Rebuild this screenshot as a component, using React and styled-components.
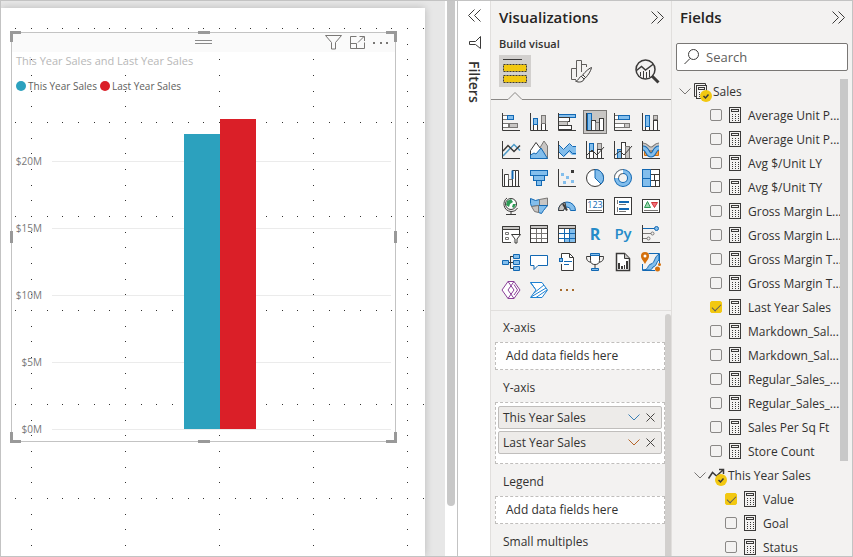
import React from "react";
import styled, { createGlobalStyle } from "styled-components";

const INK = "#323130";
const DARK = "#3b3a39";
const BLUE = "#1268b3";
const SKY = "#83beec";
const GRAY = "#797775";
const SILVER = "#c8c6c4";
const YELLOW = "#f2c811";

const GlobalStyle = createGlobalStyle`
  * { box-sizing: border-box; }
  body { margin: 0; font-family: "Open Sans", "Noto Sans", sans-serif; font-size: 12px; color: ${INK}; }
  button, input { font: inherit; color: inherit; }
  h2, h3, p, ul { margin: 0; padding: 0; }
  svg { display: block; flex: none; overflow: visible; }
`;

const Shell = styled.div`
  display: flex;
  height: 100vh;
  overflow: hidden;
  border: 1px solid #c3c3c3;
  background: #fff;
`;

/* ---------- report canvas ---------- */
const Workspace = styled.main`
  flex: 1;
  min-width: 0;
  display: flex;
`;
const Desk = styled.div`
  flex: 1;
  min-width: 0;
  padding: 7px 20px 0 0;
  background: #e7e7e7;
  overflow: hidden;
`;
const Page = styled.div`
  position: relative;
  height: 100%;
  overflow: hidden;
  background: #fff;
  box-shadow: 0 0 8px rgba(0, 0, 0, 0.2);
`;
const GridDots = styled.svg`
  width: 100%;
  height: 100%;
`;
const CanvasScroll = styled.div`
  width: 13px;
  padding: 0 2px;
  border-right: 1px solid #c3c3c3;
`;
const CanvasThumb = styled.div`
  width: 8px;
  height: 91%;
  border-radius: 0 0 4px 4px;
  background: #c8c8c8;
`;

const Visual = styled.section`
  position: absolute;
  left: 10px;
  top: 24px;
  width: 385px;
  height: 410px;
  border: 1px solid #c3c3c3;
`;
const VisualHeader = styled.header`
  display: flex;
  align-items: center;
  justify-content: flex-end;
  gap: 6px;
  height: 19px;
  padding-right: 5px;
  background: #fafafa;
`;
const HeaderButton = styled.button`
  display: grid;
  place-items: center;
  width: 18px;
  height: 18px;
  padding: 0;
  border: 0;
  background: none;
`;
const Grip = styled.div`
  position: absolute;
  top: 7px;
  left: 183px;
  width: 17px;
  height: 4px;
  border: solid #8a8a8a;
  border-width: 1px 0;
`;
const VisualTitle = styled.h3`
  padding: 0 4px;
  font-size: 11px;
  font-weight: 400;
  line-height: 18px;
  color: #b8b8b8;
`;
const Legend = styled.ul`
  display: flex;
  gap: 3px;
  padding: 8px 4px 0;
  list-style: none;
`;
const LegendItem = styled.li`
  display: flex;
  align-items: center;
  gap: 2px;
  font-size: 10px;
  line-height: 16px;
  color: #605e5c;
  &::before {
    content: "";
    width: 10px;
    height: 10px;
    border-radius: 50%;
    background: ${(p) => p.$color};
  }
`;
const Plot = styled.svg`
  width: 383px;
  height: 346px;
  text { font-size: 10px; fill: #777; text-anchor: end; }
`;
const Handles = styled.svg`
  position: absolute;
  left: -2px;
  top: -2px;
  width: 387px;
  height: 412px;
  pointer-events: none;
`;

/* ---------- filters rail ---------- */
const FilterRail = styled.aside`
  display: flex;
  flex-direction: column;
  align-items: center;
  gap: 12px;
  width: 33px;
  padding-top: 5px;
  border-right: 1px solid #e1dfdd;
  background: #fff;
`;
const RailTitle = styled.h2`
  writing-mode: vertical-rl;
  font-size: 14px;
  line-height: 20px;
  font-weight: 600;
`;
const IconButton = styled.button`
  display: grid;
  place-items: center;
  width: 18px;
  height: 18px;
  padding: 0;
  border: 0;
  background: none;
`;

/* ---------- panes ---------- */
const Pane = styled.aside`
  display: flex;
  flex-direction: column;
  width: ${(p) => (p.$last ? 180 : 181)}px;
  flex: none;
  border-right: ${(p) => (p.$last ? "0" : "1px solid #e1dfdd")};
  background: #f3f2f1;
`;
const PaneHead = styled.header`
  display: flex;
  align-items: center;
  justify-content: space-between;
  height: 32px;
  padding: 0 5px 0 8px;
`;
const PaneTitle = styled.h2`
  font-size: 15px;
  line-height: 20px;
  font-weight: 600;
  color: #252423;
`;
const Subtitle = styled.h3`
  padding-left: 8px;
  font-size: 11px;
  line-height: 22px;
  font-weight: 600;
`;
const Modes = styled.div`
  display: flex;
  gap: 34px;
  padding-left: 8px;
`;
const ModeButton = styled.button`
  display: grid;
  place-items: center;
  width: 32px;
  height: 32px;
  padding: 0;
  border: 0;
  background: ${(p) => (p.$active ? "#d2d0ce" : "transparent")};
`;
const Gallery = styled.div`
  display: grid;
  grid-template-columns: repeat(6, 24px);
  gap: 4px;
  padding: 10px 8px 8px;
  border-bottom: 1px solid #e1dfdd;
`;
const VisualType = styled.button`
  display: grid;
  place-items: center;
  width: 24px;
  height: 24px;
  padding: 0;
  border: 1px solid ${(p) => (p.$active ? "#797775" : "transparent")};
  background: ${(p) => (p.$active ? "#c8c6c4" : "transparent")};
`;
const WellArea = styled.div`
  flex: 1;
  min-height: 0;
  display: flex;
  overflow: hidden;
`;
const Wells = styled.div`
  flex: 1;
  min-width: 0;
  padding: 5px 0 0 4px;
`;
const WellThumb = styled.div`
  width: 6px;
  margin-top: 3px;
  border-radius: 3px 3px 0 0;
  background: #d2d0ce;
`;
const WellLabel = styled.h3`
  padding: 2px 8px 4px;
  font-size: 12px;
  line-height: 20px;
  font-weight: 400;
`;
const Well = styled.div`
  display: flex;
  flex-direction: column;
  gap: 2px;
  min-height: 28px;
  margin-bottom: 6px;
  padding: ${(p) => (p.$filled ? "3px 2px 9px" : "3px 10px")};
  border: 1px dashed #c0bebc;
  background: #fff;
  line-height: 20px;
`;
const Chip = styled.div`
  display: flex;
  align-items: center;
  height: 23px;
  padding: 0 3px 0 4px;
  border: 1px solid #c0bebc;
  border-radius: 2px;
  background: #edebe9;
`;
const ChipName = styled.span`
  flex: 1;
  white-space: nowrap;
`;
const ChipButton = styled.button`
  display: grid;
  place-items: center;
  width: 16px;
  height: 16px;
  padding: 0;
  border: 0;
  background: none;
`;

/* ---------- fields ---------- */
const SearchBox = styled.label`
  display: flex;
  align-items: center;
  gap: 6px;
  height: 28px;
  margin: 10px 4px 8px;
  padding: 0 7px;
  border: 1px solid #797775;
  border-radius: 2px;
  background: #fff;
`;
const SearchInput = styled.input`
  flex: 1;
  min-width: 0;
  padding: 0;
  border: 0;
  outline: 0;
  background: none;
  font-size: 13px;
  &::placeholder { color: #605e5c; opacity: 1; }
`;
const TreeArea = styled.div`
  flex: 1;
  min-height: 0;
  display: flex;
  padding-right: 4px;
  overflow: hidden;
`;
const Tree = styled.ul`
  flex: 1;
  min-width: 0;
  list-style: none;
`;
const TreeThumb = styled.div`
  width: 8px;
  height: 80%;
  background: #c8c8c8;
`;
const Row = styled.li`
  display: flex;
  align-items: center;
  height: 24px;
  padding-left: ${(p) => p.$indent}px;
  white-space: nowrap;
`;
const FieldLabel = styled.label`
  display: flex;
  align-items: center;
  gap: 7px;
`;
const Toggle = styled.button`
  display: flex;
  align-items: center;
  gap: 1px;
  padding: 0;
  border: 0;
  background: none;
`;
const Check = styled.input`
  appearance: none;
  display: grid;
  place-items: center;
  width: 12px;
  height: 12px;
  margin: 0;
  border: 1px solid #8a8886;
  border-radius: 2px;
  &:checked { border-color: ${YELLOW}; background: ${YELLOW}; }
  &:checked::after {
    content: "";
    width: 8px;
    height: 4px;
    margin-bottom: 2px;
    border: solid #605e5c;
    border-width: 0 0 1px 1px;
    transform: rotate(-45deg);
  }
`;

/* ---------- icons ---------- */
const Glyph = ({ children, w = 18, h = 18 }) => (
  <svg width={w} height={h} viewBox={`0 0 ${w} ${h}`} fill="none" stroke={DARK} aria-hidden="true">
    {children}
  </svg>
);
const Axes = () => <path d="M.5 0V17.5H18" />;

const Chevrons = ({ left }) => (
  <Glyph w={13} h={13}>
    <path d={left ? "M6.5.5l-6 6 6 6M12.5.5l-6 6 6 6" : "M.5.5l6 6-6 6M6.5.5l6 6-6 6"} />
  </Glyph>
);
const ChevronDown = ({ color = GRAY }) => (
  <Glyph w={12} h={7}><path d="M.5.5L6 6 11.5.5" stroke={color} /></Glyph>
);
const Calculator = () => (
  <Glyph w={12} h={16}>
    <rect x=".5" y=".5" width="11" height="15" />
    <rect x="2.5" y="2.5" width="7" height="2" />
    <path d="M3 7.5h8M3 9.5h8M3 11.5h8M3 13.5h8" strokeDasharray="1 2" />
  </Glyph>
);
const Badge = ({ x, y }) => (
  <g stroke="none">
    <circle cx={x} cy={y} r="6" fill={YELLOW} />
    <path d={`M${x - 2.5} ${y}l2 2 3-3.5`} stroke={DARK} strokeWidth="1.5" />
  </g>
);
const TableIcon = () => (
  <Glyph w={20} h={22}>
    <path d="M4.500 16.500h-2V3.500h11v2" />
    <rect x="4.500" y="5.500" width="10" height="13" fill="#f3f2f1" />
    <rect x="6.500" y="7.500" width="6" height="2" />
    <path d="M7 12.500h6M7 14.500h6M7 16.500h6" strokeDasharray="1 2" />
    <Badge x={14} y={16} />
  </Glyph>
);
const TrendIcon = () => (
  <Glyph w={20} h={22}>
    <path d="M1.500 14.500l4-6 4 3.500 7-6.500M12 5.500h4.500V10" strokeWidth="1.500" />
    <Badge x={14} y={16} />
  </Glyph>
);

const GALLERY = [
  ["Stacked bar chart", <><rect x=".5" y="2.5" width="5" height="4" fill="#fff" stroke={GRAY} /><rect x="5.500" y="2.500" width="6" height="4" fill={SKY} stroke={BLUE} /><rect x=".5" y="10.500" width="6" height="4" fill="#fff" stroke={GRAY} /><rect x="7.500" y="10.500" width="8" height="4" fill={SILVER} stroke={GRAY} /><Axes /></>],
  ["Stacked column chart", <><rect x="3.500" y="11.500" width="4" height="6" fill="#fff" /><rect x="3.500" y="5.500" width="4" height="6" fill={SKY} stroke={BLUE} /><rect x="11.500" y="10.500" width="4" height="7" fill="#fff" /><rect x="11.500" y="2.500" width="4" height="8" fill={SILVER} stroke={GRAY} /><Axes /></>],
  ["Clustered bar chart", <><rect x=".5" y="1.500" width="17" height="3" fill={SKY} stroke={BLUE} /><rect x=".5" y="4.500" width="11" height="4" fill="#fff" /><rect x=".5" y="8.500" width="9" height="4" fill={SILVER} stroke={GRAY} /><rect x=".5" y="12.500" width="13" height="4" fill="#fff" /><Axes /></>],
  ["Clustered column chart", <><rect x="1.500" y=".500" width="4" height="17" fill={SKY} stroke={BLUE} /><rect x="5.500" y="7.500" width="4" height="10" fill="#fff" /><rect x="9.500" y="9.500" width="4" height="8" fill={SILVER} stroke={GRAY} /><rect x="13.500" y="5.500" width="4" height="12" fill="#fff" /><Axes /></>],
  ["100% stacked bar chart", <><rect x=".5" y="2.500" width="4" height="4" fill="#fff" stroke={GRAY} /><rect x="4.500" y="2.500" width="11" height="4" fill={SKY} stroke={BLUE} /><rect x=".5" y="10.500" width="10" height="4" fill="#fff" stroke={GRAY} /><rect x="10.500" y="10.500" width="5" height="4" fill={SILVER} stroke={GRAY} /><Axes /></>],
  ["100% stacked column chart", <><rect x="3.500" y="13.500" width="4" height="4" fill="#fff" /><rect x="3.500" y="2.500" width="4" height="11" fill={SKY} stroke={BLUE} /><rect x="11.500" y="7.500" width="4" height="10" fill="#fff" /><rect x="11.500" y="2.500" width="4" height="4" fill={SILVER} stroke={GRAY} /><Axes /></>],
  ["Line chart", <><path d="M1 15l11-11.500 6 6" stroke="#4e9bc8" strokeWidth="1.500" /><path d="M1 10l5-5.500 6 6 6-6" strokeWidth="1.500" /><Axes /></>],
  ["Area chart", <><path d="M8 10l6-10 3.500 5v12.500H8z" fill={SILVER} stroke={GRAY} /><path d="M.5 9.500L6 1.500l6 8-5 8H.5z" fill="#fff" /><path d="M.5 17.500V14L4 12l2 1 5-6 6.500 10.500z" fill={SKY} stroke={BLUE} /></>],
  ["Stacked area chart", <><path d="M.5 4l5 5 6-6 3 3H18v8h-4l-3-3-5 5-5.500-5z" fill={SKY} stroke="none" /><path d="M.5 3.500l5 5 6-6 3 3H18M.5 10.500l5 5 6-6 3 3H18" stroke={BLUE} /><Axes /></>],
  ["Line and stacked column chart", <><rect x="3.500" y="2.500" width="4" height="8" fill={SKY} stroke={BLUE} /><rect x="3.500" y="10.500" width="4" height="7" fill="#fff" /><rect x="11.500" y="2.500" width="4" height="6" fill={SILVER} stroke={GRAY} /><rect x="11.500" y="8.500" width="4" height="9" fill="#fff" /><path d="M1 14l5-5 5 5 7-8" /><Axes /></>],
  ["Line and clustered column chart", <><rect x="3.500" y="8.500" width="4" height="9" fill={SKY} stroke={BLUE} /><rect x="7.500" y="1.500" width="4" height="16" fill="#fff" /><rect x="11.500" y="5.500" width="4" height="12" fill={SILVER} stroke={GRAY} /><path d="M1 14l5-4 4 4 8-9" /><Axes /></>],
  ["Ribbon chart", <><path d="M2.500 9.500h14v5h-14z" fill="#f7a14b" stroke="#d4700c" /><path d="M1 4c4 0 4 4 8 4s4-4 8-4" stroke={GRAY} strokeWidth="5" /><path d="M1 4c4 0 4 4 8 4s4-4 8-4" stroke={SILVER} strokeWidth="3" /><path d="M1 7c5 0 4 7 8 7s3-7 8-7" stroke={BLUE} strokeWidth="5" /><path d="M1 7c5 0 4 7 8 7s3-7 8-7" stroke={SKY} strokeWidth="3" /><Axes /></>],
  ["Waterfall chart", <><path d="M2.500 17V5.500h4V17M10.500 17V1.500h3V17M13.500 1.500h3V17" fill="#fff" /><path d="M10.500 10V1.500" stroke={BLUE} strokeWidth="2" /><path d="M6.500 5.500v5h4" stroke={GRAY} /><Axes /></>],
  ["Funnel", <g fill={SKY} stroke={BLUE}><rect x=".5" y="1.500" width="17" height="5" /><rect x="3.500" y="6.500" width="11" height="5" /><rect x="6.500" y="11.500" width="5" height="5" /></g>],
  ["Scatter chart", <><g stroke="none" fill={SKY}><path d="M3 4h3v3H3zM8 7h3v3H8zM5 12h3v3H5zM13 11h3v3h-3z" /><path d="M13 1h3v3h-3z" fill={DARK} /></g><Axes /></>],
  ["Pie chart", <><circle cx="9" cy="9" r="8.500" fill="#fff" /><path d="M9 9V.5a8.500 8.500 0 0 1 6 14.500z" fill={SKY} stroke={BLUE} /></>],
  ["Donut chart", <><circle cx="9" cy="9" r="6.500" stroke={BLUE} strokeWidth="5" /><circle cx="9" cy="9" r="6.500" stroke={SKY} strokeWidth="3" /><path d="M2.500 9A6.500 6.500 0 0 1 9 2.500" stroke={GRAY} strokeWidth="5" /><path d="M2.500 9A6.500 6.500 0 0 1 9 2.500" stroke="#fff" strokeWidth="3" /></>],
  ["Treemap", <><rect x=".5" y=".5" width="17" height="17" fill="#fff" /><path d="M8.500 5.500h9M8.500 11.500h9M12.500 5.500v6M13.500 11.500v6" /><path d="M.5.5h8v17h-8zM.5 9.500h8" fill={SKY} stroke={BLUE} /></>],
  ["Map", <><circle cx="9" cy="7" r="5.500" fill="#fff" /><path d="M5 4l4-2 2 3-3 2-1 3-3-2zM11 7l3 0-2 4-2-1z" fill="#2d9a55" stroke="none" /><path d="M5 1C0 4 1 14 9 14.500c3 0 5-1 6.500-3.500M9 14.500V17M4 17.500h10" /></>],
  ["Filled map", <><path d="M.5 1.500l5 2 4-1v6l-8 1-1-3z" fill={SKY} stroke={BLUE} /><path d="M9.500 2.500l8-1.500v8h-8z" fill={SILVER} stroke={GRAY} /><path d="M8.500 8.500h9l-4 5-2 3-3-1z" fill={SKY} stroke={BLUE} /><path d="M1.500 9.500l7-1v7l-4-1z" fill={SILVER} stroke={GRAY} /></>],
  ["Gauge", <><path d="M.5 13.500a8.500 8.500 0 0 1 17 0h-5a3.500 3.500 0 0 0-7 0z" fill={SKY} stroke={BLUE} /><path d="M.5 13.500A8.500 8.500 0 0 1 7 5.500l1 5a3.500 3.500 0 0 0-2.500 3z" fill={SILVER} /><path d="M9 13.500L5 7" strokeWidth="2" /></>],
  ["Card", <><rect x=".5" y="2.500" width="17" height="13" fill="#fff" /><path d="M2 13.500h14" stroke={GRAY} /><text x="9" y="11" fontSize="9" textAnchor="middle" fill={BLUE} stroke="none">123</text></>],
  ["Multi-row card", <><rect x=".5" y=".5" width="17" height="17" fill="#fff" /><path d="M3.500 3v4M3.500 10v5M5 7.500h7M5 14.500h7" stroke={GRAY} /><path d="M5 5h10M5 12h10" stroke={BLUE} strokeWidth="2" /></>],
  ["KPI", <><rect x=".5" y="2.500" width="17" height="13" fill="#fff" /><path d="M2 13.500h14" stroke={GRAY} /><path d="M2.500 10.500l3-6 3 6z" stroke="#2d9a55" fill="#9dd5af" /><path d="M9.500 5.500h6l-3 5z" stroke="#d13438" fill="#f1707b" /></>],
  ["Slicer", <><path d="M9 17.500H.5V1.500h17V9" fill="#fff" /><path d="M.5 1.500h17v3H.5z" fill={SILVER} /><path d="M3.500 7.500h3v2h-3zM3.500 12.500h3v2h-3z" stroke={GRAY} /><path d="M9.500 9.500h9l-3.500 4.500v4h-2v-4z" fill="#fff" /></>],
  ["Table", <><rect x=".5" y=".5" width="17" height="17" fill="#fff" /><path d="M1 8.500h16M1 13.500h16M6.500 4v13M11.500 4v13" stroke={GRAY} /><path d="M.5.5h17v3H.5z" fill={SILVER} /></>],
  ["Matrix", <><rect x=".5" y=".5" width="17" height="17" fill="#fff" /><path d="M12 4h5v13H6v-4h6z" fill={SKY} stroke="none" /><path d="M1 8.500h16M1 13.500h16M6.500 4v13M11.500 4v13" stroke={BLUE} /><path d="M.5 17.500V.5h17v3H.5" fill={SILVER} /></>],
  ["R script visual", <text x="9" y="15" fontSize="16" fontWeight="700" textAnchor="middle" fill="#268bc9" stroke="none">R</text>],
  ["Python visual", <text x="9" y="14" fontSize="15" fontWeight="600" textAnchor="middle" fill="#268bc9" stroke="none">Py</text>],
  ["Key influencers", <><path d="M1 3.500h12" stroke={BLUE} /><circle cx="14.500" cy="3.500" r="2" fill={SKY} stroke={BLUE} /><path d="M1 8.500h8M1 13.500h4" stroke={GRAY} /><circle cx="10.500" cy="8.500" r="1.500" stroke={GRAY} /><circle cx="6.500" cy="13.500" r="1.500" stroke={GRAY} /><Axes /></>],
  ["Decomposition tree", <><path d="M6 9.500h6M8.500 3v12.500M8.500 3.500H12M8.500 15.500H12" /><g fill={SKY} stroke={BLUE}><path d="M.5 7.500h6v4h-6zM11.500 1.500h6v4h-6zM11.500 7.500h6v4h-6zM11.500 13.500h6v4h-6z" /></g></>],
  ["Q&A", <path d="M.5 2.500h17v10H8l-4 4v-4H.5z" fill="#fff" stroke={BLUE} />],
  ["Smart narrative", <><path d="M3.500 5V.500h8l4 4v13h-12V11" fill="#fff" /><path d="M11.500.500v4h4" /><path d="M6 8.500h8M6 11.500h5" stroke={BLUE} /><rect x="1.500" y="5.500" width="3" height="3" fill={SKY} stroke={BLUE} /></>],
  ["Goals", <><path d="M4 3.500H.5c0 4 1 5 5 6M14 3.500h3.500c0 4-1 5-5 6" /><path d="M4.500 1.500h9v6c0 3-2 4-4.500 4s-4.500-1-4.500-4z" fill="#fff" /><path d="M9 12v4" /><path d="M4.500.500h9v2h-9zM5.500 15.500h7v2h-7z" stroke={BLUE} fill={SKY} /></>],
  ["Paginated report", <><path d="M2.500.5h8l5 5v12h-13z" fill="#fff" strokeWidth="1.500" /><path d="M10.500.5v5h5" fill={SILVER} /><path d="M4 16v-6h2v6zM7 16v-3h2v3zM10 16v-4h1v4zM12 16V8h2v8z" fill={DARK} stroke="none" /></>],
  ["ArcGIS Maps", <><path d="M6.500.500h11v11M13 17.500H.5V11" stroke={BLUE} /><path d="M1 17c6 0 4-5 8-6s3-7 8-10v6c-3 2-2 6-6 7-1 2-2 3-3 3z" fill={SKY} stroke={BLUE} /><path d="M3 11C1 7-1 6-1 3a4 4 0 0 1 8 0c0 3-2 4-4 8z" fill="#d4700c" stroke="none" /><circle cx="3" cy="3" r="1.500" fill="#fff" stroke="none" /><circle cx="15.500" cy="16" r="2.500" fill="#d4700c" stroke="none" /><circle cx="17.500" cy="11.500" r="1.500" fill="#d4700c" stroke="none" /></>],
  ["Power Apps", <g stroke="#8a3f98" strokeLinejoin="round"><path d="M6 .500h6L18 9l-6 8.500H6L0 9z" fill="#fff" /><path d="M6 .500L12 9l-6 8.500M12 .500L6 9l6 8.500M12 3.500L15.500 9 12 14" /></g>],
  ["Power Automate", <g stroke="#1f82d2" strokeLinejoin="round"><path d="M.5 1.500H12l5.500 7.500-5.500 7.500H.5L6 9z" fill="#fff" /><path d="M4 12L14 4M1 16L16 7M6 16.500L17 9M.5 1.500L5 7.500" /></g>],
  ["More visuals", <g stroke="none" fill="#a66b2c"><path d="M2 8h2v2H2zM8 8h2v2H8zM14 8h2v2h-2z" /></g>],
];

const MEASURES = [
  "Average Unit P...", "Average Unit P...", "Avg $/Unit LY", "Avg $/Unit TY",
  "Gross Margin L...", "Gross Margin L...", "Gross Margin T...", "Gross Margin T...",
  "Last Year Sales", "Markdown_Sal...", "Markdown_Sal...", "Regular_Sales_...",
  "Regular_Sales_...", "Sales Per Sq Ft", "Store Count",
];
const TICKS = ["$20M", "$15M", "$10M", "$5M", "$0M"];

/* Snap grid: dotted lines every 94px, six dots to each cell. */
const STEPS = [0, 16, 31, 47, 63, 78];
const Dots = () => (
  <GridDots aria-hidden="true">
    <defs>
      <pattern id="snap" x="30" y="20" width="94" height="94" patternUnits="userSpaceOnUse">
        {STEPS.map((s) => (
          <g key={s} fill={INK}>
            <rect x={s} y="0" width="1" height="1" />
            <rect x="0" y={s} width="1" height="1" />
          </g>
        ))}
      </pattern>
    </defs>
    <rect x="14" y="20" width="100%" height="100%" fill="url(#snap)" />
  </GridDots>
);

const Field = ({ name, indent, checked }) => (
  <Row $indent={indent}>
    <FieldLabel>
      <Check type="checkbox" defaultChecked={checked} />
      <Calculator />
      {name}
    </FieldLabel>
  </Row>
);

const FieldChip = ({ name, color }) => (
  <Chip>
    <ChipName>{name}</ChipName>
    <ChipButton aria-label={`${name} options`}><ChevronDown color={color} /></ChipButton>
    <ChipButton aria-label={`Remove ${name}`}>
      <Glyph w={9} h={9}><path d="M.5.5l8 8M8.500.5l-8 8" stroke="#484644" /></Glyph>
    </ChipButton>
  </Chip>
);

const ChartVisual = () => (
  <Visual>
    <VisualHeader>
      <Grip />
      <HeaderButton aria-label="Filters on this visual">
        <Glyph w={17} h={15}><path d="M.5.500h16l-6 7v6.500h-4V7.500z" stroke={GRAY} /></Glyph>
      </HeaderButton>
      <HeaderButton aria-label="Focus mode">
        <Glyph w={15} h={13}><path d="M6.500.500h-6v12h14v-6M.5 7.500h6v5M8 6.500l6-6M9.500.500h5V5" stroke={GRAY} /></Glyph>
      </HeaderButton>
      <HeaderButton aria-label="More options">
        <Glyph w={16} h={2}><path d="M0 1h2M7 1h2M13 1h2" stroke={GRAY} strokeWidth="2" /></Glyph>
      </HeaderButton>
    </VisualHeader>
    <VisualTitle>This Year Sales and Last Year Sales</VisualTitle>
    <Legend>
      <LegendItem $color="#2ca1be">This Year Sales</LegendItem>
      <LegendItem $color="#da1f28">Last Year Sales</LegendItem>
    </Legend>
    <Plot viewBox="0 0 383 346">
      {TICKS.map((t, i) => (
        <g key={t}>
          <text x="30" y={71 + i * 67}>{t}</text>
          <rect x="40" y={67 + i * 67} width="339" height="1" fill="#ebebeb" />
        </g>
      ))}
      <rect x="172" y="40" width="36" height="295" fill="#2ca1be" />
      <rect x="208" y="25" width="36" height="310" fill="#da1f28" />
    </Plot>
    <Handles viewBox="0 0 387 412" fill="none" stroke="#999" strokeWidth="3" aria-hidden="true">
      <path d="M1.500 11V1.500H11M376 1.500h9.500V11M1.500 401v9.500H11M376 410.500h9.500V401M188 1.500h12M188 410.500h12M1.500 200v12M385.500 200v12" />
    </Handles>
  </Visual>
);

export default function App() {
  return (
    <>
      <GlobalStyle />
      <Shell>
        <Workspace>
          <Desk>
            <Page>
              <Dots />
              <ChartVisual />
            </Page>
          </Desk>
          <CanvasScroll><CanvasThumb /></CanvasScroll>
        </Workspace>

        <FilterRail>
          <IconButton aria-label="Expand filters"><Chevrons left /></IconButton>
          <Glyph w={13} h={13}><path d="M12.500.500v12L7.500 8.500H1.500v-3h6z" /></Glyph>
          <RailTitle>Filters</RailTitle>
        </FilterRail>

        <Pane>
          <PaneHead>
            <PaneTitle>Visualizations</PaneTitle>
            <IconButton aria-label="Collapse visualizations"><Chevrons /></IconButton>
          </PaneHead>
          <Subtitle>Build visual</Subtitle>
          <Modes>
            <ModeButton $active aria-label="Build visual">
              <Glyph w={24} h={24}>
                <path d="M0 .5h19" />
                <rect x=".5" y="5.500" width="23" height="7" fill={YELLOW} strokeDasharray="2 1" />
                <rect x=".5" y="16.500" width="23" height="7" fill={YELLOW} strokeDasharray="2 1" />
              </Glyph>
            </ModeButton>
            <ModeButton aria-label="Format visual">
              <Glyph w={24} h={24}>
                <path d="M7 20.500H2.500v-11h5M7.500 18V1.500h5V13M12.500 5.500h5V8" stroke="#605e5c" />
                <path d="M22.500 8.500c-3 1-8 6-10 9l2.500 2.500c3-2 7-8 7.500-11.500z" fill="#f3f2f1" />
                <path d="M12.500 17.500c-3 0-2 4-6 4.500 3 2 8 1 8.500-2z" />
                <path d="M14 16l2.500 2.500" />
              </Glyph>
            </ModeButton>
            <ModeButton aria-label="Analytics">
              <Glyph w={24} h={24}>
                <circle cx="10.500" cy="10.500" r="9.500" strokeWidth="1.500" />
                <path d="M1.500 11.500l5-4 4 3.500 8-6" strokeWidth="1.500" />
                <path d="M5.500 13v4M8.500 12v7M11.500 13v6M14.500 11v7" />
                <path d="M17 17l6.500 6.500" strokeWidth="3" />
              </Glyph>
            </ModeButton>
          </Modes>
          <svg width="180" height="13" viewBox="0 0 180 13" fill="none" stroke="#8a8886" aria-hidden="true">
            <path d="M0 12.500h17l7-7 7 7h149" />
          </svg>
          <Gallery>
            {GALLERY.map(([name, art]) => (
              <VisualType key={name} aria-label={name} $active={name === "Clustered column chart"}>
                <Glyph>{art}</Glyph>
              </VisualType>
            ))}
          </Gallery>
          <WellArea>
            <Wells>
              <WellLabel>X-axis</WellLabel>
              <Well>Add data fields here</Well>
              <WellLabel>Y-axis</WellLabel>
              <Well $filled>
                <FieldChip name="This Year Sales" color="#3a7fb5" />
                <FieldChip name="Last Year Sales" color="#b5652a" />
              </Well>
              <WellLabel>Legend</WellLabel>
              <Well>Add data fields here</Well>
              <WellLabel>Small multiples</WellLabel>
              <Well />
            </Wells>
            <WellThumb />
          </WellArea>
        </Pane>

        <Pane $last>
          <PaneHead>
            <PaneTitle>Fields</PaneTitle>
            <IconButton aria-label="Collapse fields"><Chevrons /></IconButton>
          </PaneHead>
          <SearchBox>
            <Glyph w={16} h={16}>
              <circle cx="9.500" cy="5.500" r="5" />
              <path d="M6 9.500l-5.500 5.500" />
            </Glyph>
            <SearchInput type="text" placeholder="Search" aria-label="Search fields" />
          </SearchBox>
          <TreeArea>
            <Tree>
              <Row $indent={7}>
                <Toggle aria-expanded="true"><ChevronDown /><TableIcon />Sales</Toggle>
              </Row>
              {MEASURES.map((name, i) => (
                <Field key={i} name={name} indent={38} checked={name === "Last Year Sales"} />
              ))}
              <Row $indent={22}>
                <Toggle aria-expanded="true"><ChevronDown /><TrendIcon />This Year Sales</Toggle>
              </Row>
              <Field name="Value" indent={53} checked />
              <Field name="Goal" indent={53} />
              <Field name="Status" indent={53} />
            </Tree>
            <TreeThumb />
          </TreeArea>
        </Pane>
      </Shell>
    </>
  );
}
